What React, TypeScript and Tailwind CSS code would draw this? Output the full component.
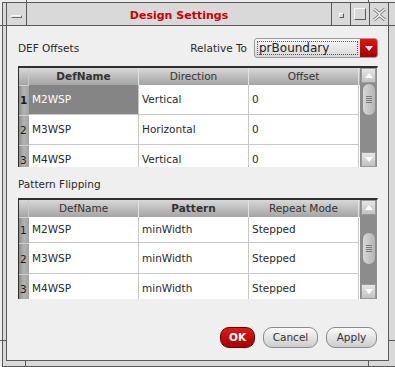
import React from "react";

type Header = { label: string; bold?: boolean };

function Tri({ dir, color = "#ffffff" }: { dir: "up" | "down"; color?: string }) {
  return (
    <svg width="8" height="5" viewBox="0 0 8 5">
      {dir === "up" ? (
        <polygon points="0,5 8,5 4,0" fill={color} />
      ) : (
        <polygon points="0,0 8,0 4,5" fill={color} />
      )}
    </svg>
  );
}

function ArrowBtn({ dir, h }: { dir: "up" | "down"; h: number }) {
  return (
    <div
      className="shrink-0 mx-[1px] flex items-center justify-center bg-gradient-to-b from-[#e6e6e6] to-[#c2c2c2] border border-[#9a9a9a]"
      style={{ height: h }}
    >
      <Tri dir={dir} />
    </div>
  );
}

function Scrollbar({ thumbTop, downH }: { thumbTop: number; downH: number }) {
  return (
    <div className="w-[17px] shrink-0 flex flex-col bg-[#8c8c8c] overflow-hidden">
      <ArrowBtn dir="up" h={15} />
      <div className="flex-1 flex flex-col items-center">
        <div
          className="w-[14px] h-[33px] rounded-[7px] bg-gradient-to-r from-[#d8d8d8] to-[#b4b4b4] border border-[#8a8a8a] flex flex-col items-center justify-center gap-[1px]"
          style={{ marginTop: thumbTop }}
        >
          <div className="w-[6px] h-[1px] bg-[#7a7a7a]" />
          <div className="w-[6px] h-[1px] bg-[#7a7a7a]" />
          <div className="w-[6px] h-[1px] bg-[#7a7a7a]" />
          <div className="w-[6px] h-[1px] bg-[#7a7a7a]" />
        </div>
      </div>
      <ArrowBtn dir="down" h={downH} />
    </div>
  );
}

function Table({
  headers,
  rows,
  heights,
  selected,
  thumbTop,
  downH,
}: {
  headers: Header[];
  rows: string[][];
  heights: number[];
  selected: boolean;
  thumbTop: number;
  downH: number;
}) {
  return (
    <div className="h-[101px] flex border-t-2 border-l border-[#2e2e2e] border-r border-r-[#fafafa] bg-white overflow-hidden">
      <div className="flex-1 flex flex-col overflow-hidden">
        <div className="h-[17px] shrink-0 flex bg-gradient-to-b from-[#d8d8d8] to-[#a4a4a4] text-[#333]">
          <div className="w-[10px] shrink-0 border-r border-[#c8c8c8]" />
          {headers.map((h) => (
            <div
              key={h.label}
              className={
                "w-[110px] shrink-0 border-r border-[#e2e2e2] flex items-center justify-center " +
                (h.bold ? "font-bold" : "")
              }
            >
              {h.label}
            </div>
          ))}
        </div>
        {rows.map((r, i) => (
          <div key={i} className="flex shrink-0" style={{ height: heights[i] }}>
            <div className="w-[10px] shrink-0 bg-gradient-to-r from-[#8e8e8e] via-[#b4b4b4] to-[#a2a2a2] border-t border-t-[#d0d0d0] flex items-center pl-[1px] text-[#1a1a1a]">
              <span className={selected && i === 0 ? "font-bold" : ""}>{i + 1}</span>
            </div>
            {r.map((c, j) => (
              <div
                key={j}
                className={
                  "w-[110px] shrink-0 border-r border-b border-[#c8c8c8] flex items-center pl-[3px] " +
                  (selected && i === 0 && j === 0 ? "bg-[#858585] text-white" : "text-[#2a2a2a]")
                }
              >
                {c}
              </div>
            ))}
          </div>
        ))}
      </div>
      <Scrollbar thumbTop={thumbTop} downH={downH} />
    </div>
  );
}

function Btn({ children, red, w }: { children: React.ReactNode; red?: boolean; w: number }) {
  return (
    <div
      className={
        "h-[21px] rounded-[9px] border flex items-center justify-center " +
        (red
          ? "bg-gradient-to-b from-[#dd1a1a] to-[#a80000] border-[#6e0000] text-white font-bold"
          : "bg-gradient-to-b from-[#fbfbfb] to-[#cdcdcd] border-[#8a8a8a] text-[#333]")
      }
      style={{ width: w }}
    >
      {children}
    </div>
  );
}

export default function App() {
  return (
    <div className="relative w-[395px] h-[367px] bg-[#ececec] pt-[2px] pl-[2px] overflow-hidden font-['DejaVu_Sans',sans-serif] text-[10.5px] leading-none">
      <div className="h-[365px] border-l border-t border-b border-[#5a5a5a] bg-[#d9d9d9] pl-[3px] pr-[6px] pb-[5px]">
        <div className="h-[358px] border-l border-r border-b border-[#5a5a5a] flex flex-col">
          {/* title bar */}
          <div className="h-[23px] shrink-0 flex border-b border-[#5a5a5a] bg-[#d9d9d9]">
            <div className="w-[20px] shrink-0 border-r border-[#5a5a5a] flex items-center justify-center">
              <div className="w-[11px] h-[3px] bg-[#e8e8e8] border-t border-l border-[#f8f8f8] border-b border-r border-b-[#6a6a6a] border-r-[#6a6a6a] mt-[4px]" />
            </div>
            <div className="flex-1 flex items-center justify-center text-[11px] font-bold text-[#cc0000] pt-[2px]">
              Design Settings
            </div>
            <div className="w-[19px] shrink-0 border-l border-[#5a5a5a] flex items-center justify-center">
              <div className="w-[5px] h-[5px] bg-[#d9d9d9] border border-[#5a5a5a] border-t-[#fafafa] border-l-[#fafafa] mt-[2px]" />
            </div>
            <div className="w-[19px] shrink-0 border-l border-[#5a5a5a] flex items-center justify-center">
              <div className="w-[12px] h-[12px] border border-[#fafafa] border-b-[#5a5a5a] border-r-[#5a5a5a]" />
            </div>
            <div className="w-[19px] shrink-0 border-l border-[#5a5a5a] flex items-center justify-center">
              <svg width="13" height="13" viewBox="0 0 13 13">
                <path
                  d="M1 1 L6.5 5.5 L12 1 M1 12 L6.5 7.5 L12 12"
                  fill="none"
                  stroke="#7a7a7a"
                  strokeWidth="3"
                />
                <path
                  d="M1 1 L6.5 5.5 L12 1 M1 12 L6.5 7.5 L12 12 M6.5 5.5 L6.5 7.5"
                  fill="none"
                  stroke="#f4f4f4"
                  strokeWidth="1.4"
                />
              </svg>
            </div>
          </div>
          {/* content */}
          <div className="flex-1 bg-[#efefef] pl-[11px] pr-[10px] flex flex-col text-[#2a2a2a]">
            <div className="mt-[12px] h-[20px] flex items-center">
              <span className="flex-1">DEF Offsets</span>
              <span className="mr-[7px]">Relative To</span>
              <div className="w-[124px] h-[20px] flex rounded-[3px] border border-[#9a9a9a] bg-gradient-to-b from-[#f8f8f8] to-[#d8d8d8] overflow-hidden">
                <div className="flex-1 flex p-[2px]">
                  <div className="flex-1 border border-dotted border-[#555] flex items-center pl-[1px] text-[12px] text-[#222]">
                    prBoundary
                  </div>
                </div>
                <div className="w-[17px] shrink-0 bg-gradient-to-b from-[#e01414] to-[#a80000] flex items-center justify-center">
                  <Tri dir="down" />
                </div>
              </div>
            </div>
            <div className="mt-[8px]">
              <Table
                headers={[{ label: "DefName", bold: true }, { label: "Direction" }, { label: "Offset" }]}
                rows={[
                  ["M2WSP", "Vertical", "0"],
                  ["M3WSP", "Horizontal", "0"],
                  ["M4WSP", "Vertical", "0"],
                ]}
                heights={[30, 30, 30]}
                selected
                thumbTop={0}
                downH={15}
              />
            </div>
            <div className="mt-[9px] h-[16px] flex items-center">Pattern Flipping</div>
            <div className="mt-[6px]">
              <Table
                headers={[{ label: "DefName" }, { label: "Pattern", bold: true }, { label: "Repeat Mode" }]}
                rows={[
                  ["M2WSP", "minWidth", "Stepped"],
                  ["M3WSP", "minWidth", "Stepped"],
                  ["M4WSP", "minWidth", "Stepped"],
                ]}
                heights={[26, 31, 30]}
                selected={false}
                thumbTop={17}
                downH={15}
              />
            </div>
            <div className="mt-[28px] flex justify-end gap-[8px] pr-[1px]">
              <Btn red w={35}>OK</Btn>
              <Btn w={55}>Cancel</Btn>
              <Btn w={51}>Apply</Btn>
            </div>
          </div>
        </div>
      </div>
      {/* frame resize ticks */}
      <div className="absolute left-[26px] top-0 w-[1px] h-[3px] bg-[#5a5a5a]" />
      <div className="absolute left-[368px] top-0 w-[1px] h-[3px] bg-[#5a5a5a]" />
      <div className="absolute left-0 top-[25px] w-[6px] h-[1px] bg-[#5a5a5a]" />
      <div className="absolute left-0 top-[340px] w-[6px] h-[1px] bg-[#5a5a5a]" />
      <div className="absolute left-[25px] top-[360px] w-[1px] h-[6px] bg-[#5a5a5a]" />
      <div className="absolute left-[368px] top-[360px] w-[1px] h-[6px] bg-[#5a5a5a]" />
      <div className="absolute left-[388px] top-[25px] w-[7px] h-[1px] bg-[#5a5a5a]" />
      <div className="absolute left-[388px] top-[340px] w-[7px] h-[1px] bg-[#5a5a5a]" />
    </div>
  );
}
